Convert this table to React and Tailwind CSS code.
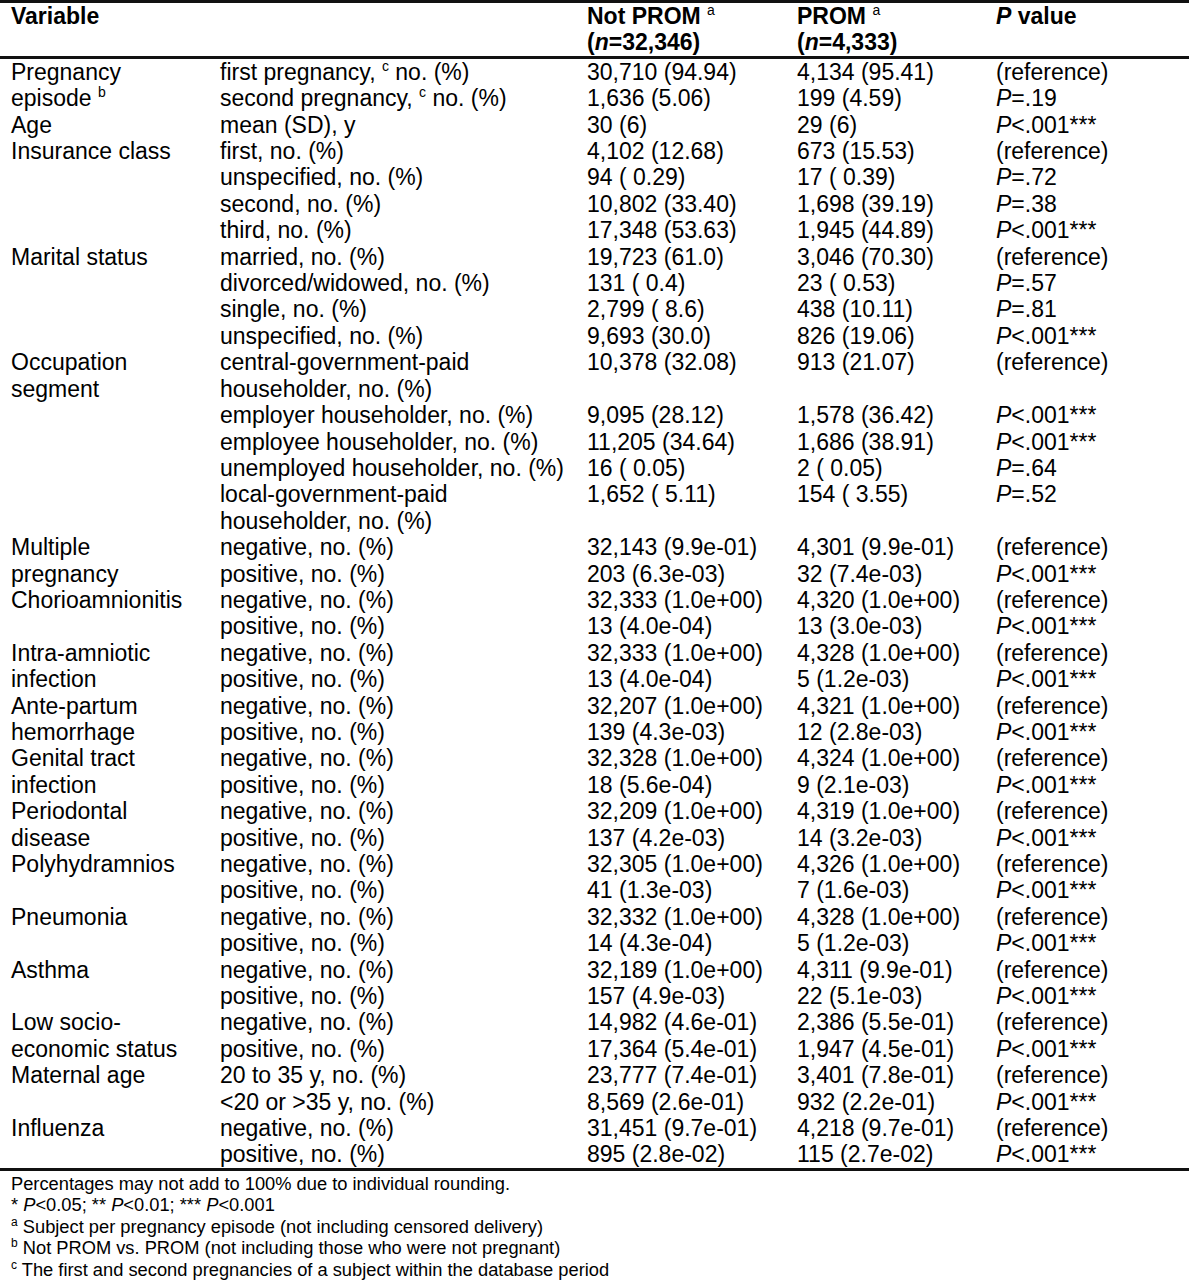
import React from "react";

const Sup = ({ children }) => (
  <span className="relative -top-[9px] text-[14px] leading-none font-normal">{children}</span>
);

const P = () => <i>P</i>;

// each group: label (with manual breaks), rows of [desc, notProm, prom, pval]
const groups = [
  {
    label: (
      <>
        Pregnancy
        <br />
        episode <Sup>b</Sup>
      </>
    ),
    rows: [
      [<>first pregnancy, <Sup>c</Sup> no. (%)</>, "30,710 (94.94)", "4,134 (95.41)", "ref"],
      [<>second pregnancy, <Sup>c</Sup> no. (%)</>, "1,636 (5.06)", "199 (4.59)", "=.19"],
    ],
  },
  { label: "Age", rows: [["mean (SD), y", "30 (6)", "29 (6)", "<.001***"]] },
  {
    label: "Insurance class",
    rows: [
      ["first, no. (%)", "4,102 (12.68)", "673 (15.53)", "ref"],
      ["unspecified, no. (%)", "94 ( 0.29)", "17 ( 0.39)", "=.72"],
      ["second, no. (%)", "10,802 (33.40)", "1,698 (39.19)", "=.38"],
      ["third, no. (%)", "17,348 (53.63)", "1,945 (44.89)", "<.001***"],
    ],
  },
  {
    label: "Marital status",
    rows: [
      ["married, no. (%)", "19,723 (61.0)", "3,046 (70.30)", "ref"],
      ["divorced/widowed, no. (%)", "131 ( 0.4)", "23 ( 0.53)", "=.57"],
      ["single, no. (%)", "2,799 ( 8.6)", "438 (10.11)", "=.81"],
      ["unspecified, no. (%)", "9,693 (30.0)", "826 (19.06)", "<.001***"],
    ],
  },
  {
    label: (
      <>
        Occupation
        <br />
        segment
      </>
    ),
    rows: [
      [
        <>
          central-government-paid
          <br />
          householder, no. (%)
        </>,
        "10,378 (32.08)",
        "913 (21.07)",
        "ref",
      ],
      ["employer householder, no. (%)", "9,095 (28.12)", "1,578 (36.42)", "<.001***"],
      ["employee householder, no. (%)", "11,205 (34.64)", "1,686 (38.91)", "<.001***"],
      ["unemployed householder, no. (%)", "16 ( 0.05)", "2 ( 0.05)", "=.64"],
      [
        <>
          local-government-paid
          <br />
          householder, no. (%)
        </>,
        "1,652 ( 5.11)",
        "154 ( 3.55)",
        "=.52",
      ],
    ],
  },
  {
    label: (
      <>
        Multiple
        <br />
        pregnancy
      </>
    ),
    rows: [
      ["negative, no. (%)", "32,143 (9.9e-01)", "4,301 (9.9e-01)", "ref"],
      ["positive, no. (%)", "203 (6.3e-03)", "32 (7.4e-03)", "<.001***"],
    ],
  },
  {
    label: "Chorioamnionitis",
    rows: [
      ["negative, no. (%)", "32,333 (1.0e+00)", "4,320 (1.0e+00)", "ref"],
      ["positive, no. (%)", "13 (4.0e-04)", "13 (3.0e-03)", "<.001***"],
    ],
  },
  {
    label: (
      <>
        Intra-amniotic
        <br />
        infection
      </>
    ),
    rows: [
      ["negative, no. (%)", "32,333 (1.0e+00)", "4,328 (1.0e+00)", "ref"],
      ["positive, no. (%)", "13 (4.0e-04)", "5 (1.2e-03)", "<.001***"],
    ],
  },
  {
    label: (
      <>
        Ante-partum
        <br />
        hemorrhage
      </>
    ),
    rows: [
      ["negative, no. (%)", "32,207 (1.0e+00)", "4,321 (1.0e+00)", "ref"],
      ["positive, no. (%)", "139 (4.3e-03)", "12 (2.8e-03)", "<.001***"],
    ],
  },
  {
    label: (
      <>
        Genital tract
        <br />
        infection
      </>
    ),
    rows: [
      ["negative, no. (%)", "32,328 (1.0e+00)", "4,324 (1.0e+00)", "ref"],
      ["positive, no. (%)", "18 (5.6e-04)", "9 (2.1e-03)", "<.001***"],
    ],
  },
  {
    label: (
      <>
        Periodontal
        <br />
        disease
      </>
    ),
    rows: [
      ["negative, no. (%)", "32,209 (1.0e+00)", "4,319 (1.0e+00)", "ref"],
      ["positive, no. (%)", "137 (4.2e-03)", "14 (3.2e-03)", "<.001***"],
    ],
  },
  {
    label: "Polyhydramnios",
    rows: [
      ["negative, no. (%)", "32,305 (1.0e+00)", "4,326 (1.0e+00)", "ref"],
      ["positive, no. (%)", "41 (1.3e-03)", "7 (1.6e-03)", "<.001***"],
    ],
  },
  {
    label: "Pneumonia",
    rows: [
      ["negative, no. (%)", "32,332 (1.0e+00)", "4,328 (1.0e+00)", "ref"],
      ["positive, no. (%)", "14 (4.3e-04)", "5 (1.2e-03)", "<.001***"],
    ],
  },
  {
    label: "Asthma",
    rows: [
      ["negative, no. (%)", "32,189 (1.0e+00)", "4,311 (9.9e-01)", "ref"],
      ["positive, no. (%)", "157 (4.9e-03)", "22 (5.1e-03)", "<.001***"],
    ],
  },
  {
    label: (
      <>
        Low socio-
        <br />
        economic status
      </>
    ),
    rows: [
      ["negative, no. (%)", "14,982 (4.6e-01)", "2,386 (5.5e-01)", "ref"],
      ["positive, no. (%)", "17,364 (5.4e-01)", "1,947 (4.5e-01)", "<.001***"],
    ],
  },
  {
    label: "Maternal age",
    rows: [
      ["20 to 35 y, no. (%)", "23,777 (7.4e-01)", "3,401 (7.8e-01)", "ref"],
      ["<20 or >35 y, no. (%)", "8,569 (2.6e-01)", "932 (2.2e-01)", "<.001***"],
    ],
  },
  {
    label: "Influenza",
    rows: [
      ["negative, no. (%)", "31,451 (9.7e-01)", "4,218 (9.7e-01)", "ref"],
      ["positive, no. (%)", "895 (2.8e-02)", "115 (2.7e-02)", "<.001***"],
    ],
  },
];

const cell = "pl-[11px] pr-0 py-0 align-top text-left whitespace-nowrap";
const td = `${cell} font-normal`;
const th = `${cell} font-bold`;

function PValue({ v }) {
  if (v === "ref") return "(reference)";
  return (
    <>
      <P />
      {v}
    </>
  );
}

export default function App() {
  return (
    <div
      className="w-[1192px] bg-white text-black"
      style={{ fontFamily: '"Liberation Sans", Arial, sans-serif' }}
    >
      <table className="w-[1189px] table-fixed border-collapse text-[23px] leading-[26.4px]">
        <colgroup>
          <col className="w-[209px]" />
          <col className="w-[367px]" />
          <col className="w-[210px]" />
          <col className="w-[199px]" />
          <col className="w-[204px]" />
        </colgroup>
        <thead>
          <tr className="border-t-[3px] border-b-[3px] border-[#111]">
            <th className={th}>Variable</th>
            <th className={th}></th>
            <th className={th}>
              Not PROM <Sup>a</Sup>
              <br />(<i>n</i>=32,346)
            </th>
            <th className={th}>
              PROM <Sup>a</Sup>
              <br />(<i>n</i>=4,333)
            </th>
            <th className={th}>
              <i>P</i> value
            </th>
          </tr>
        </thead>
        <tbody className="border-b-[3px] border-[#111]">
          {groups.map((g, gi) =>
            g.rows.map((r, ri) => (
              <tr key={`${gi}-${ri}`}>
                {ri === 0 && (
                  <td className={td} rowSpan={g.rows.length}>
                    {g.label}
                  </td>
                )}
                <td className={td}>{r[0]}</td>
                <td className={td}>{r[1]}</td>
                <td className={td}>{r[2]}</td>
                <td className={td}>
                  <PValue v={r[3]} />
                </td>
              </tr>
            ))
          )}
        </tbody>
      </table>

      <div className="pl-[11px] pt-[2px] text-[18.3px] leading-[21.4px]">
        <div>Percentages may not add to 100% due to individual rounding.</div>
        <div>
          * <P />
          &lt;0.05; ** <P />
          &lt;0.01; *** <P />
          &lt;0.001
        </div>
        <div>
          <span className="relative -top-[7px] text-[12px] leading-none">a</span> Subject per
          pregnancy episode (not including censored delivery)
        </div>
        <div>
          <span className="relative -top-[7px] text-[12px] leading-none">b</span> Not PROM vs.
          PROM (not including those who were not pregnant)
        </div>
        <div>
          <span className="relative -top-[7px] text-[12px] leading-none">c</span> The first and
          second pregnancies of a subject within the database period
        </div>
      </div>
    </div>
  );
}
